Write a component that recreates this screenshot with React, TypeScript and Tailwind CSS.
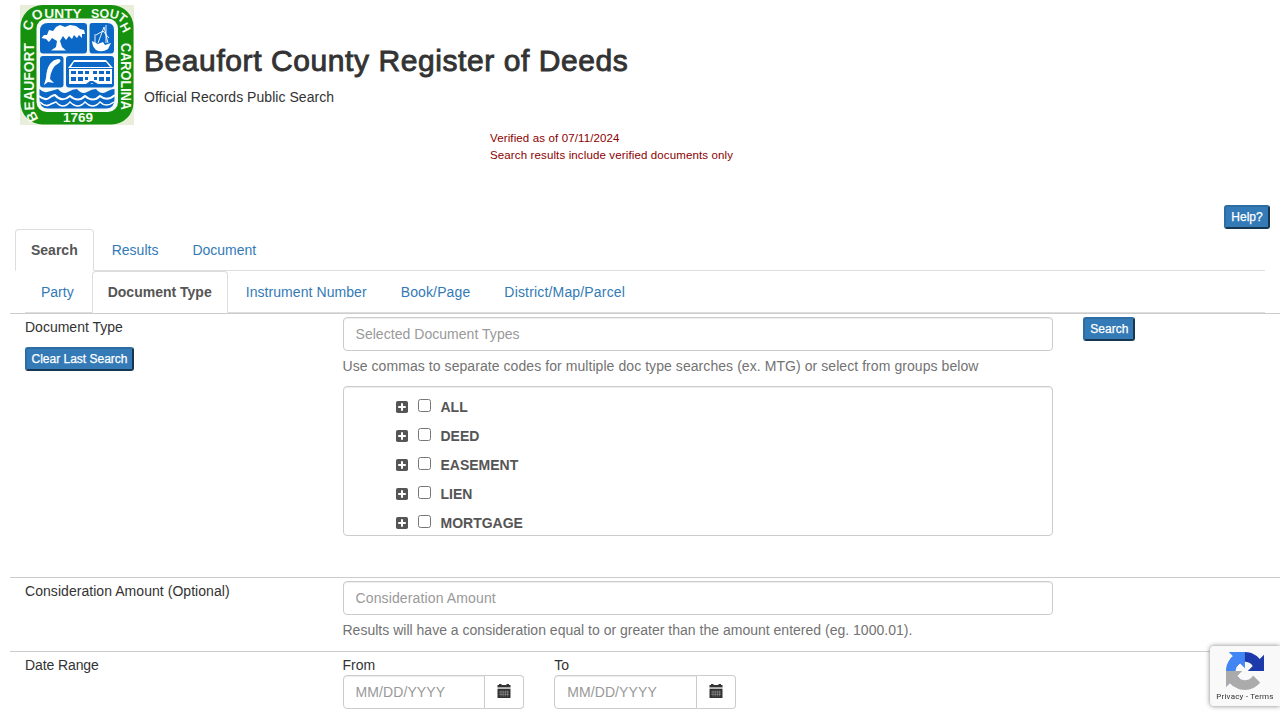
import React from "react";

const buttonClass =
  "inline-flex h-6 items-center justify-center rounded-[3px] border-2 border-t-[#2e6da4] border-l-[#2e6da4] border-r-[#17364f] border-b-[#17364f] bg-[#337ab7] text-xs text-white [-webkit-text-stroke:0.25px_white]";

const inputClass =
  "block h-[34px] w-full rounded border border-[#ccc] bg-white px-3 text-sm shadow-[inset_0_1px_1px_rgba(0,0,0,0.075)] outline-none placeholder:text-[#999]";

function CountySeal() {
  return (
    <svg width="114" height="120" viewBox="0 0 114 120" className="block shrink-0 overflow-visible">
      <rect width="114" height="120" fill="#e9eedb" />
      <rect x="0.5" y="0" width="113" height="119.5" rx="22" fill="#15900f" />
      <rect x="16.5" y="13.5" width="81.5" height="93.5" rx="10" fill="#f6fbf8" />
      <g fill="#0b68c6">
        <path d="M28 18H64Q67 18 67 21V45Q67 48.500 64 48.500H23Q20 48.500 20 45V26Q20 18 28 18Z" />
        <path d="M72 18H87Q94 18 94 25V45Q94 48.500 91 48.500H72Q69.500 48.500 69.500 45V21Q69.500 18 72 18Z" />
        <rect x="20" y="51" width="23.500" height="31.500" rx="3" />
        <rect x="46" y="51" width="48" height="31.500" rx="3" />
        <path d="M19.500 84Q23 88 27 87T38 84Q43 90 48 87T57 84Q62 90 67 87T76 84Q81 90 86 87T94.500 84V94Q94.500 103.500 86 103.500H28Q19.500 103.500 19.500 94Z" />
      </g>
      <g fill="#fff">
        <path d="M21.500 33L24 30L27 30L29 25L33 26L36 22L40 20L45 22L50 20L56 21L60 24L64 25L65 29L62 29L62 33L59 30L57 33L54 30L52 34L49 31L46 35L43 31L40 36L42 42L46 45.500H31L36 42L37 36L32 33L29 37L26 34Z" />
        <path d="M72 36L78 39L83 37L85 40L91 38L88 44Q82 48 76 45Q72 41 72 36Z" />
        <path d="M39 54Q42 55 39 58Q31 62 30 74L34 78L28 77L24 80L26 73Q27 55 39 54Z" />
        <path d="M54 55H86L93 63H48Z" />
        <rect x="49" y="64" width="43" height="15" />
      </g>
      <path d="M78 38L84 22L88 38M76 30L83 26L89 33M86 20V38M75 29V38" fill="none" stroke="#fff" strokeWidth=".9" />
      <g fill="#0b68c6">
        <path d="M51 66h5v3h-5zM58 66h5v3h-5zM65 66h4v3h-4zM73 66h4v3h-4zM79 66h5v3h-5zM86 66h4v3h-4zM51 72h5v4h-5zM58 72h5v4h-5zM65 72h3v3h-3zM74 72h3v3h-3zM79 72h5v4h-5zM86 72h4v4h-4z" />
        <path d="M66 79L70 76H73L78 79L75 80L72 78L69 80Z" />
        <path d="M54 57H86L90 62H51Z" />
      </g>
      <g fill="none" stroke="#fff" strokeWidth="2">
        <path d="M19 91Q25 96 29 93T35 90Q42 98 50 91Q58 98 65 91Q73 98 80 91Q87 97 95 90" />
        <path d="M20 97Q25 102 29 100T36 97Q43 105 50 97Q58 105 65 97Q73 105 80 97Q86 103 94 97" strokeWidth="1.500" />
      </g>
      <defs>
        <path id="seal-left" d="M19 114Q13.500 107 14 98V38" />
        <path id="seal-county" d="M12 26.500Q12.500 13.500 25 12.500H64" />
        <path id="seal-right" d="M101 38V108" />
      </defs>
      <g fill="#f4fbee" fontFamily="Liberation Sans, sans-serif" fontWeight="bold" fontSize="14">
        <text textLength="77" lengthAdjust="spacingAndGlyphs"><textPath href="#seal-left">BEAUFORT</textPath></text>
        <text fontSize="13.500" textLength="58" lengthAdjust="spacingAndGlyphs"><textPath href="#seal-county">COUNTY</textPath></text>
        <text fontSize="12.500" x="71 79.5 89 96.8 99.2" y="12.5 12.5 12.3 14 20.5" rotate="0 0 14 38 62">SOUTH</text>
        <text textLength="67" lengthAdjust="spacingAndGlyphs"><textPath href="#seal-right">CAROLINA</textPath></text>
        <text x="43" y="117" fontSize="13" textLength="30" lengthAdjust="spacingAndGlyphs">1769</text>
      </g>
    </svg>
  );
}

function Tab({
  label,
  active = false,
  tracking = "",
}: {
  label: string;
  active?: boolean;
  tracking?: string;
}) {
  return (
    <li className={`-mb-px mr-0.5 ${tracking}`}>
      <a
        href="#"
        className={
          active
            ? "block h-[42px] rounded-t border border-[#ddd] border-b-white bg-white px-[15px] py-2.5 leading-5 font-bold text-[#555]"
            : "block h-[42px] border border-transparent px-[15px] py-2.5 leading-5 text-[#337ab7]"
        }
      >
        {label}
      </a>
    </li>
  );
}

function PlusSquare() {
  return (
    <svg width="12" height="12" viewBox="0 0 12 12" className="block">
      <rect width="12" height="12" rx="1.800" fill="#555" />
      <path d="M6 2.200V9.800M2.200 6H9.800" stroke="#fff" strokeWidth="2" />
    </svg>
  );
}

function CalendarIcon() {
  return (
    <svg width="14" height="14" viewBox="0 0 14 14" className="mb-0.5 block">
      <path d="M.5 1H2V0H4.500V1H9.500V0H12V1H13.500V3.500H.5Z" fill="#333" />
      <path d="M.5 3.500H13.500V5H.5Z" fill="#bbb" />
      <path d="M.5 5H13.500V14H.5Z" fill="#333" />
      <path d="M4 6.500V12.500M6.200 6.500V12.500M8.400 6.500V12.500M10.600 6.500V12.500M2 8H12M2 10.300H12" stroke="#aaa" strokeWidth=".5" />
    </svg>
  );
}

function DateField({ label }: { label: string }) {
  return (
    <div className="w-1/6 px-[15px]">
      <label className="block h-5 leading-5">{label}</label>
      <div className="flex h-[34px]">
        <input
          placeholder="MM/DD/YYYY"
          className="h-full w-0 flex-1 rounded-l border border-[#ccc] bg-white px-3 text-sm tracking-[0.1px] shadow-[inset_0_1px_1px_rgba(0,0,0,0.075)] outline-none placeholder:text-[#999]"
        />
        <span className="flex w-[39px] items-center justify-center rounded-r border border-l-0 border-[#ccc] bg-white">
          <CalendarIcon />
        </span>
      </div>
    </div>
  );
}

function RecaptchaBadge() {
  return (
    <div className="fixed top-[646px] right-0 flex h-[60px] w-[70px] flex-col items-center rounded-l-sm bg-[#f9f9f9] pt-1.5 shadow-[0_0_5px_gray]">
      <svg width="38" height="38" viewBox="0 0 64 64" className="block">
        <path d="M64 31.955l-.033-1.370V4.687l-7.160 7.160C50.948 4.674 42.033.093 32.050.093 21.660.093 12.430 5.044 6.590 12.710l11.736 11.860a15.550 15.550 0 0 1 4.754-5.334c2.050-1.600 4.952-2.906 8.968-2.906.485 0 .86.057 1.135.163 4.976.393 9.288 3.140 11.828 7.124l-8.307 8.307z" fill="#1c3aa9" />
        <path d="M31.862.094l-1.370.033H4.594l7.160 7.160C4.580 13.147 0 22.060 0 32.046c0 10.390 4.950 19.620 12.618 25.460L24.477 45.770a15.550 15.550 0 0 1-5.335-4.754c-1.600-2.050-2.906-4.952-2.906-8.968 0-.485.057-.86.163-1.135.393-4.976 3.140-9.288 7.124-11.828l8.307 8.307z" fill="#4285f4" />
        <path d="M.001 32.045l.033 1.370v25.898l7.160-7.160c5.860 7.173 14.774 11.754 24.760 11.754 10.390 0 19.620-4.950 25.460-12.618L45.677 39.430a15.550 15.550 0 0 1-4.754 5.335c-2.050 1.600-4.952 2.906-8.968 2.906-.485 0-.86-.057-1.135-.163-4.976-.393-9.288-3.140-11.828-7.124l8.307-8.307z" fill="#ababab" />
      </svg>
      <div className="mt-0.5 font-['Roboto',sans-serif] text-[8px] leading-[10px] tracking-[0.2px] whitespace-nowrap text-[#333]">
        Privacy - Terms
      </div>
    </div>
  );
}

const groups = ["ALL", "DEED", "EASEMENT", "LIEN", "MORTGAGE"];

export default function App() {
  return (
    <div className="h-[720px] w-[1280px] overflow-hidden bg-white font-['Liberation_Sans',Arial,sans-serif] text-sm leading-5 text-[#333]">
      <header className="flex h-[130px] pt-[5px] pl-5">
        <CountySeal />
        <div className="pl-2.5">
          <h1 className="mt-[39px] text-[30px] leading-[33px] tracking-[0.58px] whitespace-nowrap [-webkit-text-stroke:0.9px_#333]">
            Beaufort County Register of Deeds
          </h1>
          <p className="mt-2.5 tracking-[0.04px]">Official Records Public Search</p>
        </div>
      </header>
      <div className="h-[75px] pl-[490px] text-[11.500px] leading-[17px] tracking-[0.13px] text-[#8b0000]">
        <p>Verified as of 07/11/2024</p>
        <p>Search results include verified documents only</p>
      </div>
      <div className="flex h-6 justify-end pr-2.5">
        <button className={`${buttonClass} w-[46px]`}>Help?</button>
      </div>
      <ul className="mx-[15px] flex h-[42px] border-b border-[#ddd]">
        <Tab label="Search" active />
        <Tab label="Results" />
        <Tab label="Document" />
      </ul>
      <ul className="mr-[15px] ml-[25px] flex h-[42px] border-b border-[#ddd]">
        <Tab label="Party" />
        <Tab label="Document Type" active />
        <Tab label="Instrument Number" tracking="tracking-[0.07px]" />
        <Tab label="Book/Page" tracking="tracking-[0.13px]" />
        <Tab label="District/Map/Parcel" tracking="tracking-[0.17px]" />
      </ul>

      <main className="ml-2.5">
        <section className="flex h-[264px] border-t border-[#ccc] pt-[3px]">
          <div className="w-1/4 px-[15px]">
            <div>Document Type</div>
            <button className={`${buttonClass} mt-2.5 w-[109px]`}>Clear Last Search</button>
          </div>
          <div className="w-7/12 px-[15px]">
            <input className={`${inputClass} tracking-[0.04px]`} placeholder="Selected Document Types" />
            <p className="mt-[5px] mb-2.5 tracking-[0.067px] text-[#737373]">
              Use commas to separate codes for multiple doc type searches (ex. MTG) or select from groups below
            </p>
            <div className="h-[150px] overflow-hidden rounded border border-[#ccc] bg-white pt-[5px] pl-[52px] shadow-[inset_0_1px_1px_rgba(0,0,0,0.075)]">
              {groups.map((group) => (
                <div key={group} className="flex h-[29px] items-center font-bold text-[#555]">
                  <PlusSquare />
                  <span className="mr-2.5 mb-[3px] ml-[10px] block h-[13px] w-[13px] rounded-[2.500px] border border-[#767676] bg-white" />
                  {group}
                </div>
              ))}
            </div>
          </div>
          <div className="w-1/6 px-[15px]">
            <button className={`${buttonClass} w-[52px]`}>Search</button>
          </div>
        </section>

        <section className="flex h-[74px] border-t border-[#ccc] pt-[3px]">
          <div className="w-1/4 px-[15px] tracking-[0.05px]">Consideration Amount (Optional)</div>
          <div className="w-7/12 px-[15px]">
            <input className={`${inputClass} tracking-[0.13px]`} placeholder="Consideration Amount" />
            <p className="mt-[5px] tracking-[0.01px] text-[#737373]">
              Results will have a consideration equal to or greater than the amount entered (eg. 1000.01).
            </p>
          </div>
        </section>

        <section className="flex border-t border-[#ccc] pt-[3px]">
          <div className="w-1/4 px-[15px] tracking-[-0.1px]">Date Range</div>
          <DateField label="From" />
          <DateField label="To" />
        </section>
      </main>
      <RecaptchaBadge />
    </div>
  );
}
